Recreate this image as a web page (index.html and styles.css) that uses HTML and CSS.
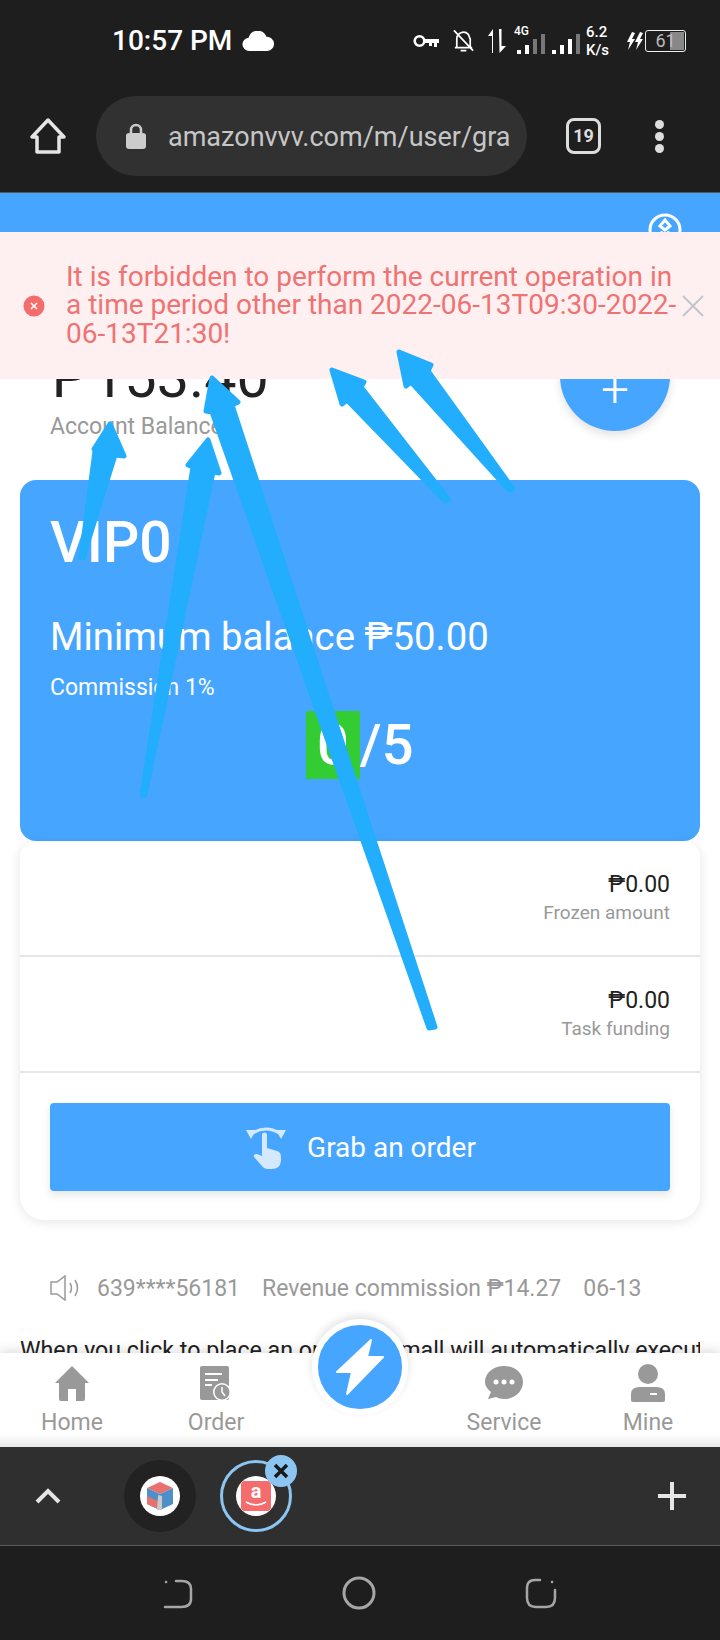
FILE: index.html
```html
<!DOCTYPE html>
<html lang="en">
<head>
    <meta charset="UTF-8">
    <meta name="viewport" content="width=device-width, initial-scale=1.0">
    <title>Grab an order</title>
    <link rel="stylesheet" href="styles.css">
</head>
<body>
    <!-- Status bar -->
    <div class="status-bar">
        <span class="clock">10:57 PM</span>
        <svg class="cloud" width="32" height="21" viewBox="0 0 34 22"><path fill="#fff" d="M8 21a7 7 0 0 1-1-14 10 10 0 0 1 19-1 7.500 7.500 0 0 1 1 15z"/></svg>
        <div class="status-icons">
            <svg class="st-key" width="26" height="14" viewBox="0 0 26 14"><circle cx="6.500" cy="7" r="4.800" fill="none" stroke="#fff" stroke-width="2.600"/><path fill="#fff" d="M11 5h15v4h-2v4h-3V9h-2v3h-3V9h-5z"/></svg>
            <svg class="st-bell" width="23" height="24" viewBox="0 0 24 24" fill="none" stroke="#fff" stroke-width="1.800"><path d="M5 18v-8a7 7 0 0 1 12-5l2 5v8M3 19h18M9 22h6M2 1l20 21"/></svg>
            <svg class="st-arrows" width="18" height="24" viewBox="0 0 18 24"><path fill="#fff" d="M4 24V7H0l5-7v24zM11 0h2.500v17H18l-6.500 7z"/></svg>
            <div class="st-net"><span class="st-4g">4G</span>
                <div class="bars"><i class="b1"></i><i class="b2"></i><i class="b3 dim"></i><i class="b4 dim"></i></div>
            </div>
            <div class="bars sim2"><i class="b1"></i><i class="b2"></i><i class="b3"></i><i class="b4 dim"></i></div>
            <div class="st-speed"><span>6.2</span><span>K/s</span></div>
            <svg class="st-bolt" width="18" height="20" viewBox="0 0 18 20"><path fill="#fff" d="M6 1 1 11h3l-2 8 7-11H6l3-6zM14 1 9 11h3l-2 8 7-11h-3l3-6z"/></svg>
            <div class="battery"><span class="battery-level"></span><span class="battery-num">61</span></div>
        </div>
    </div>

    <!-- Browser toolbar -->
    <div class="toolbar">
        <svg class="tb-home" width="38" height="38" viewBox="0 0 38 38" fill="none" stroke="#e6e6e6" stroke-width="3.500" stroke-linejoin="round"><path d="M19 3 3 20h5v15h22V20h5z"/></svg>
        <div class="omnibox">
            <svg width="20" height="26" viewBox="0 0 20 26"><path fill="none" stroke="#ccc" stroke-width="2.500" d="M5 11V7a5 5 0 0 1 10 0v4"/><rect x="0" y="10" width="20" height="16" rx="3" fill="#ccc"/></svg>
            <span class="url">amazonvvv.com/m/user/grab</span>
        </div>
        <div class="tab-count">19</div>
        <div class="tb-menu"><i></i><i></i><i></i></div>
    </div>

    <!-- Page -->
    <div class="page">
        <div class="page-head">
            <svg width="36" height="36" viewBox="0 0 36 36" fill="none" stroke="#fff" stroke-width="3"><circle cx="18" cy="18" r="15"/><path d="M18 8l5 6-5 4-5-4zM8 24l8-4M28 24l-8-4"/></svg>
        </div>

        <div class="balance-row">
            <div>
                <div class="balance">₱153.40</div>
                <div class="balance-label">Account Balance</div>
            </div>
            <div class="add-btn">+</div>
        </div>

        <div class="vip-card">
            <div class="vip-name">VIP0</div>
            <div class="vip-min">Minimum balance ₱50.00</div>
            <div class="vip-rate">Commission 1%</div>
            <div class="vip-count"><span class="done">0</span>/5</div>
        </div>

        <div class="funds-card">
            <div class="funds-row">
                <div class="funds-value">₱0.00</div>
                <div class="funds-label">Frozen amount</div>
            </div>
            <div class="funds-row">
                <div class="funds-value">₱0.00</div>
                <div class="funds-label">Task funding</div>
            </div>
            <div class="grab-wrap">
                <div class="grab-btn">
                    <svg class="grab-icon" width="40" height="44" viewBox="0 0 40 44"><path fill="none" stroke="#d4e9ff" stroke-width="3" d="M5 9Q20-1 35 9"/><path fill="#d4e9ff" d="M0 5l10 0-5 9zM40 5H30l5 9z"/><path fill="#d4e9ff" d="M16 10a2.500 2.500 0 0 1 5 0v13l10 3q4 1 4 6v4q-1 8-9 8h-5q-3 0-5-3l-8-9q-1-3 3-3l5 2z"/></svg>
                    <span>Grab an order</span>
                </div>
            </div>
        </div>

        <div class="notice">
            <svg width="30" height="26" viewBox="0 0 30 26" fill="none" stroke="#999" stroke-width="1.500"><path d="M1 7h6l8-6v24l-8-6H1zM20 8q3 5 0 10M25 5q5 8 0 16"/></svg>
            <span class="notice-user">639****56181</span>
            <span class="notice-text">Revenue commission ₱14.27</span>
            <span>06-13</span>
        </div>

        <p class="rules">When you click to place an order, the mall will automatically execute the order</p>
    </div>

    <!-- Bottom nav -->
    <div class="bottom-nav">
        <div class="nav-item">
            <svg width="34" height="36" viewBox="0 0 34 36"><path fill="#999" d="M17 1 0 18h4v16q0 2 2 2h7V24h8v12h7q2 0 2-2V18h4z"/></svg>
            <span>Home</span>
        </div>
        <div class="nav-item">
            <svg width="32" height="36" viewBox="0 0 32 36"><rect width="29" height="34" y="1" rx="2" fill="#999"/><path stroke="#fff" stroke-width="2" d="M5 9h17M5 15h13M5 20h7"/><circle cx="22" cy="27" r="9" fill="#fff"/><circle cx="22" cy="27" r="7.500" fill="#999"/><path stroke="#fff" stroke-width="1.500" fill="none" d="M22 22v5l3 4"/></svg>
            <span>Order</span>
        </div>
        <div class="nav-item"></div>
        <div class="nav-item">
            <svg width="38" height="36" viewBox="0 0 38 36"><path fill="#999" d="M19 1c11 0 19 7 19 16s-8 17-19 17q-5 0-8-2l-8 2 3-7Q0 22 0 17C0 8 8 1 19 1z"/><circle cx="11" cy="17" r="2.500" fill="#fff"/><circle cx="19" cy="17" r="2.500" fill="#fff"/><circle cx="27" cy="17" r="2.500" fill="#fff"/></svg>
            <span>Service</span>
        </div>
        <div class="nav-item">
            <svg width="34" height="38" viewBox="0 0 34 38"><ellipse cx="17" cy="10" rx="10" ry="10" fill="#999"/><path fill="#999" d="M0 30q0-7 9-7h16q9 0 9 7v6q0 2-2 2H2q-2 0-2-2z"/><rect x="19" y="29" width="7" height="2" fill="#fff"/></svg>
            <span>Mine</span>
        </div>
    </div>

    <div class="fab">
        <svg width="48" height="56" viewBox="0 0 48 56"><path fill="#fff" stroke="#fff" stroke-width="2" stroke-linejoin="round" d="M35 1 1 33h15l-5 22 36-37H31z"/></svg>
    </div>

    <!-- Tab strip -->
    <div class="tab-strip">
        <svg class="strip-up" width="26" height="16" viewBox="0 0 26 16" fill="none" stroke="#e6e6e6" stroke-width="4"><path d="M2 14 13 3l11 11"/></svg>
        <div class="tab-item tab-dark">
            <div class="favicon">
                <svg width="30" height="30" viewBox="0 0 30 30"><path fill="#e8716f" d="M15 1 28 7 15 13 2 7z"/><path fill="#4d8fc9" d="M2 7l13 6v16L2 23z"/><path fill="#e8716f" d="M2 15l13 6v8L2 23z"/><path fill="#4d8fc9" d="M28 7 15 13v16l13-6z"/><path fill="#c9c9c9" d="M13 14l4 1v14h-5z"/></svg>
            </div>
        </div>
        <div class="tab-item tab-open">
            <div class="favicon">
                <div class="favicon-a">
                    <span>a</span>
                    <svg width="24" height="7" viewBox="0 0 24 7" fill="none" stroke="#fff" stroke-width="1.500"><path d="M2 1q10 6 20 0"/></svg>
                </div>
            </div>
            <div class="tab-close">
                <svg width="16" height="16" viewBox="0 0 16 16" stroke="#1a1a1a" stroke-width="3.500"><path d="M2 2l12 12M14 2 2 14"/></svg>
            </div>
        </div>
        <svg class="strip-add" width="30" height="30" viewBox="0 0 30 30" stroke="#e6e6e6" stroke-width="4"><path d="M15 1v28M1 15h28"/></svg>
    </div>

    <!-- Nav bar -->
    <div class="system-nav">
        <svg width="30" height="32" viewBox="0 0 30 32" fill="none" stroke="#a6a6a6" stroke-width="2.500" stroke-linecap="round"><path d="M2 30h16q10 0 10-8V12q0-8-9-8h-6M3 5h.1"/></svg>
        <svg width="34" height="34" viewBox="0 0 34 34" fill="none" stroke="#a6a6a6" stroke-width="3"><circle cx="17" cy="17" r="15"/></svg>
        <svg width="32" height="32" viewBox="0 0 32 32" fill="none" stroke="#a6a6a6" stroke-width="2.500" stroke-linecap="round"><path d="M15 3H10Q2 3 2 11v10q0 9 9 9h10q9 0 9-9V13M27 5h.1"/></svg>
    </div>

    <!-- Error message -->
    <div class="alert">
        <svg class="alert-icon" width="22" height="22" viewBox="0 0 22 22"><circle cx="11" cy="11" r="10.500" fill="#f56c6c"/><path stroke="#fff" stroke-width="1.600" d="M8 8l6 6M14 8l-6 6"/></svg>
        <p class="alert-text">It is forbidden to perform the current operation in a time period other than 2022-06-13T09:30-2022-06-13T21:30!</p>
        <svg class="alert-close" width="22" height="22" viewBox="0 0 22 22" stroke="#c0c4cc" stroke-width="1.800"><path d="M1 1l20 20M21 1 1 21"/></svg>
    </div>

    <!-- Hand-drawn arrows on the screenshot -->
    <svg class="arrows" width="720" height="1640" viewBox="0 0 720 1640">
        <polygon points="110,424 124,456 115,455 83,558 81,558 95,451 94,449"/>
        <polygon points="208,440 219,473 213,472 145,795 142,795 193,467 188,465"/>
        <polygon points="212,378 238,402 232,405 435,1027 429,1028 212,412 206,411"/>
        <polygon points="332,370 364,382 361,387 449,500 445,501 347,400 342,404"/>
        <polygon points="399,352 431,365 428,371 513,489 509,490 411,382 406,386"/>
    </svg>
</body>
</html>
```

FILE: styles.css
```css
/* General */
* {
    box-sizing: border-box;
}

body {
    position: relative;
    width: 720px;
    height: 1640px;
    margin: 0;
    overflow: hidden;
    font-family: Roboto, "Noto Sans", sans-serif;
    background-color: #fff;
}

p {
    margin: 0;
}

/* Status bar */
.status-bar {
    display: flex;
    align-items: center;
    height: 78px;
    padding: 0 34px 0 112px;
    background-color: #1e1e1e;
    color: #fff;
}

.clock {
    margin-top: 4px;
    font-size: 28px;
    font-weight: 500;
    line-height: 70px;
    white-space: nowrap;
}

.cloud {
    margin-left: 10px;
    margin-top: 5px;
}

.status-icons {
    display: flex;
    align-items: center;
    margin-left: auto;
    padding-top: 4px;
}

.st-key {
    margin-right: 13px;
}

.st-bell {
    margin-right: 13px;
}

.st-arrows {
    margin-right: 8px;
}

.st-net {
    position: relative;
    width: 31px;
    height: 26px;
    margin-right: 7px;
}

.st-4g {
    position: absolute;
    top: -4px;
    left: 0;
    font-size: 12px;
    font-weight: 500;
}

.bars {
    display: flex;
    align-items: flex-end;
    gap: 4px;
    height: 20px;
}

.st-net .bars {
    position: absolute;
    left: 3px;
    bottom: 0;
}

.bars i {
    display: block;
    width: 4px;
    background-color: #fff;
}

.bars .dim {
    background-color: #777;
}

.bars .b1 {
    height: 4px;
}

.bars .b2 {
    height: 9px;
}

.bars .b3 {
    height: 15px;
}

.bars .b4 {
    height: 20px;
}

.sim2 {
    margin-right: 6px;
    margin-top: 6px;
}

.st-speed {
    display: flex;
    flex-direction: column;
    width: 24px;
    font-size: 15px;
    line-height: 18px;
    font-weight: 500;
    margin-right: 16px;
    white-space: nowrap;
}

.st-bolt {
    margin-right: 1px;
}

.battery {
    position: relative;
    width: 41px;
    height: 22px;
    border: 1.500px solid #eee;
    border-radius: 3px;
    text-align: center;
    font-size: 18px;
    line-height: 20px;
    color: #bbb;
    overflow: hidden;
}

.battery-level {
    position: absolute;
    top: 1px;
    right: 1px;
    bottom: 1px;
    width: 14px;
    background-color: #888;
}

.battery-num {
    position: relative;
}

/* Toolbar */
.toolbar {
    display: flex;
    align-items: center;
    height: 115px;
    padding-top: 2px;
    background-color: #1e1e1e;
    border-bottom: 1px solid #555;
}

.tb-home {
    margin-left: 29px;
}

.omnibox {
    display: flex;
    align-items: center;
    gap: 22px;
    width: 431px;
    height: 80px;
    margin-left: 29px;
    padding: 0 17px 0 30px;
    border-radius: 40px;
    background-color: #313131;
    overflow: hidden;
}

.url {
    flex: 1;
    padding-top: 2px;
    font-size: 27px;
    color: #c6c6c6;
    white-space: nowrap;
    overflow: hidden;
}

.tab-count {
    width: 35px;
    height: 36px;
    margin-left: 39px;
    border: 3.500px solid #ddd;
    border-radius: 8px;
    font-size: 18px;
    font-weight: 700;
    line-height: 29px;
    text-align: center;
    color: #ddd;
}

.tb-menu {
    display: flex;
    flex-direction: column;
    gap: 3px;
    margin-left: 54px;
}

.tb-menu i {
    display: block;
    width: 9px;
    height: 9px;
    border-radius: 50%;
    background-color: #ddd;
}

/* Page */
.page {
    height: 1160px;
    overflow: hidden;
}

.page-head {
    display: flex;
    justify-content: flex-end;
    height: 128px;
    padding: 19px 37px 0 0;
    background-color: #46a6ff;
}

/* Balance */
.balance-row {
    display: flex;
    justify-content: space-between;
    height: 110px;
    padding: 0 50px;
}

.balance {
    padding-top: 30px;
    font-size: 57.500px;
    line-height: 54px;
    color: #222;
}

.balance-label {
    margin-top: 8px;
    font-size: 23px;
    color: #999;
}

.add-btn {
    width: 110px;
    height: 110px;
    border-radius: 50%;
    background-color: #46a6ff;
    box-shadow: 0 4px 10px rgba(0, 0, 0, 0.12);
    color: #fff;
    font-size: 50px;
    font-weight: 300;
    line-height: 136px;
    text-align: center;
}

/* VIP card */
.vip-card {
    height: 361px;
    margin: 49px 20px 0;
    padding: 29px 30px 0;
    border-radius: 16px;
    background-color: #46a6ff;
    color: #fff;
}

.vip-name {
    font-size: 57px;
    font-weight: 500;
    line-height: 68px;
}

.vip-min {
    margin-top: 38px;
    font-size: 38.300px;
    line-height: 44px;
}

.vip-rate {
    margin-top: 16px;
    font-size: 23px;
    line-height: 26px;
}

.vip-count {
    margin-top: 10px;
    padding-left: 256px;
    font-size: 56px;
    font-weight: 500;
    line-height: 68px;
}

.done {
    display: inline-block;
    padding: 0 11px;
    background-color: #33cc33;
}

/* Funds card */
.funds-card {
    height: 379px;
    margin: 0 20px;
    border-radius: 16px 16px 24px 24px;
    background-color: #fff;
    box-shadow: 0 2px 12px rgba(0, 0, 0, 0.1);
}

.funds-row {
    height: 116px;
    padding: 29px 30px 0;
    border-bottom: 2px solid #e6e6e6;
    text-align: right;
}

.funds-value {
    font-size: 23px;
    line-height: 30px;
    color: #222;
}

.funds-label {
    font-size: 19px;
    line-height: 26px;
    color: #999;
}

.grab-wrap {
    padding: 30px 30px 0;
}

.grab-btn {
    display: flex;
    align-items: center;
    justify-content: center;
    gap: 21px;
    height: 88px;
    border-radius: 4px;
    background-color: #46a6ff;
    box-shadow: 0 4px 8px rgba(0, 0, 0, 0.1);
    color: #fff;
    font-size: 28px;
}

.grab-icon {
    margin-left: 2px;
}

/* Notice */
.notice {
    display: flex;
    align-items: center;
    gap: 22px;
    height: 36px;
    margin-top: 50px;
    padding-left: 50px;
    font-size: 23px;
    color: #999;
    white-space: nowrap;
}

.notice-user {
    margin-left: -5px;
}

.rules {
    width: 680px;
    margin: 29px 20px 0;
    font-size: 23.200px;
    line-height: 30px;
    color: #222;
    white-space: nowrap;
    overflow: hidden;
}

/* Bottom nav */
.bottom-nav {
    position: relative;
    display: grid;
    grid-template-columns: repeat(5, 144px);
    height: 94px;
    padding-top: 11px;
    background: linear-gradient(#fff 86%, #e8e8e8);
    box-shadow: 0 -3px 10px rgba(0, 0, 0, 0.12);
}

.nav-item {
    display: flex;
    flex-direction: column;
    align-items: center;
    gap: 6px;
    font-size: 23px;
    line-height: 30px;
    color: #999;
}

.nav-item svg {
    height: 38px;
}

.fab {
    position: absolute;
    top: 1319px;
    left: 312px;
    display: flex;
    align-items: center;
    justify-content: center;
    width: 96px;
    height: 96px;
    border: 6px solid #fff;
    border-radius: 50%;
    background-color: #46a6ff;
    box-shadow: 0 -3px 8px rgba(0, 0, 0, 0.12);
}

/* Tab strip */
.tab-strip {
    position: relative;
    display: flex;
    align-items: center;
    height: 99px;
    background-color: #2f2f2f;
    border-bottom: 1px solid #5a5a5a;
}

.strip-up {
    margin-left: 35px;
}

.tab-item {
    position: relative;
    display: flex;
    align-items: center;
    justify-content: center;
    width: 72px;
    height: 72px;
    border-radius: 50%;
}

.tab-dark {
    margin-left: 63px;
    background-color: #222;
}

.tab-open {
    margin-left: 24px;
    border: 3.500px solid #8cc5f2;
}

.favicon {
    display: flex;
    align-items: center;
    justify-content: center;
    width: 40px;
    height: 40px;
    border-radius: 50%;
    background-color: #fff;
}

.favicon-a {
    display: flex;
    flex-direction: column;
    align-items: center;
    width: 30px;
    height: 30px;
    border-radius: 4px;
    background-color: #f56c6c;
    color: #fff;
    font-size: 20px;
    font-weight: 700;
    line-height: 20px;
}

.tab-close {
    position: absolute;
    top: -8px;
    right: -8px;
    display: flex;
    align-items: center;
    justify-content: center;
    width: 32px;
    height: 32px;
    border-radius: 50%;
    background-color: #8cc5f2;
}

.strip-add {
    margin-left: auto;
    margin-right: 33px;
}

/* Nav bar */
.system-nav {
    display: flex;
    align-items: center;
    justify-content: center;
    gap: 149px;
    height: 94px;
    background-color: #1e1e1e;
}

/* Error message */
.alert {
    position: absolute;
    top: 232px;
    left: 0;
    display: flex;
    align-items: center;
    width: 720px;
    height: 147px;
    padding: 0 16px 0 23px;
    background-color: #fef0f0;
}

.alert-icon {
    flex-shrink: 0;
}

.alert-text {
    flex: 1;
    margin-left: 21px;
    font-size: 28px;
    line-height: 28.500px;
    color: #ef7373;
}

.alert-close {
    flex-shrink: 0;
}

/* Arrows */
.arrows {
    position: absolute;
    top: 0;
    left: 0;
    pointer-events: none;
}

.arrows polygon {
    fill: #22aefc;
    stroke: #22aefc;
    stroke-width: 5;
    stroke-linejoin: round;
}
```
